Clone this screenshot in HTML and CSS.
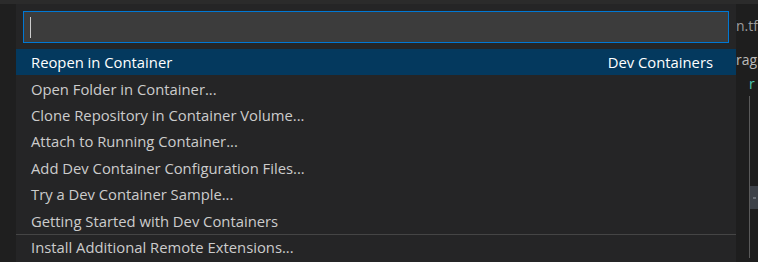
FILE: index.html
```html
<!DOCTYPE html>
<html lang="en">
<head>
    <meta charset="UTF-8">
    <title>Quick Pick</title>
    <link rel="stylesheet" href="styles.css">
</head>
<body>
    <div class="topbar"></div>
    <div class="workbench">
        <div class="gutter"></div>
        <div class="quick-pick">
            <div class="input-box"><span class="caret"></span></div>
            <ul class="list">
                <li class="item selected"><span>Reopen in Container</span><span class="desc">Dev Containers</span></li>
                <li class="item"><span>Open Folder in Container...</span></li>
                <li class="item"><span>Clone Repository in Container Volume...</span></li>
                <li class="item"><span>Attach to Running Container...</span></li>
                <li class="item"><span>Add Dev Container Configuration Files...</span></li>
                <li class="item"><span>Try a Dev Container Sample...</span></li>
                <li class="item"><span>Getting Started with Dev Containers</span></li>
                <li class="item separated"><span>Install Additional Remote Extensions...</span></li>
            </ul>
        </div>
        <div class="editor">
            <div class="tab-label">n.tf</div>
            <div class="line">rag</div>
            <div class="line green">r</div>
            <div class="ruler">
                <div class="indent"></div>
                <div class="scroll"><span class="thumb"><i></i></span></div>
            </div>
        </div>
    </div>
</body>
</html>
```

FILE: styles.css
```css
html, body {
    margin: 0;
    height: 100%;
    overflow: hidden;
}
body {
    background: #1e1e1e;
    font-family: "Open Sans", "Noto Sans", sans-serif;
    font-size: 14.8px;
    color: #cccccc;
}
.topbar {
    height: 4px;
    background: #2b2b2b;
}
.workbench {
    display: flex;
    height: 258px;
}
.gutter {
    width: 16px;
    background: #1f1f1f;
}
.quick-pick {
    width: 720px;
    background: #252526;
}
.input-box {
    margin: 7px 7px 6px;
    height: 30px;
    border: 1px solid #0078d4;
    background: #3c3c3c;
    display: flex;
    align-items: center;
    padding-left: 6px;
}
.caret {
    width: 1px;
    height: 21px;
    background: #cccccc;
}
.list {
    list-style: none;
    margin: 0;
    padding: 0;
}
.item {
    display: flex;
    justify-content: space-between;
    align-items: center;
    height: 26.4px;
    padding: 0 23px 0 15px;
    white-space: nowrap;
}
.item.selected {
    background: #04395e;
    color: #ffffff;
}
.item.separated {
    border-top: 1px solid #454545;
    height: 25.4px;
}
.editor {
    flex: 1;
    overflow: hidden;
    color: #bbbbbb;
    font-size: 14px;
}
.tab-label {
    height: 44px;
    line-height: 44px;
    white-space: nowrap;
    color: #9d9d9d;
}
.line {
    height: 24px;
    line-height: 24px;
    white-space: nowrap;
}
.line.green {
    color: #4ec9b0;
    padding-left: 13px;
}
.ruler {
    display: flex;
    height: 162px;
}
.indent {
    width: 13px;
    border-right: 1px solid #5a5a5a;
}
.scroll {
    flex: 1;
    padding-top: 90px;
}
.thumb {
    display: flex;
    justify-content: center;
    align-items: center;
    height: 23px;
    background: #3d4148;
}
.thumb i {
    width: 3px;
    height: 2px;
    background: #6b7078;
}
```
